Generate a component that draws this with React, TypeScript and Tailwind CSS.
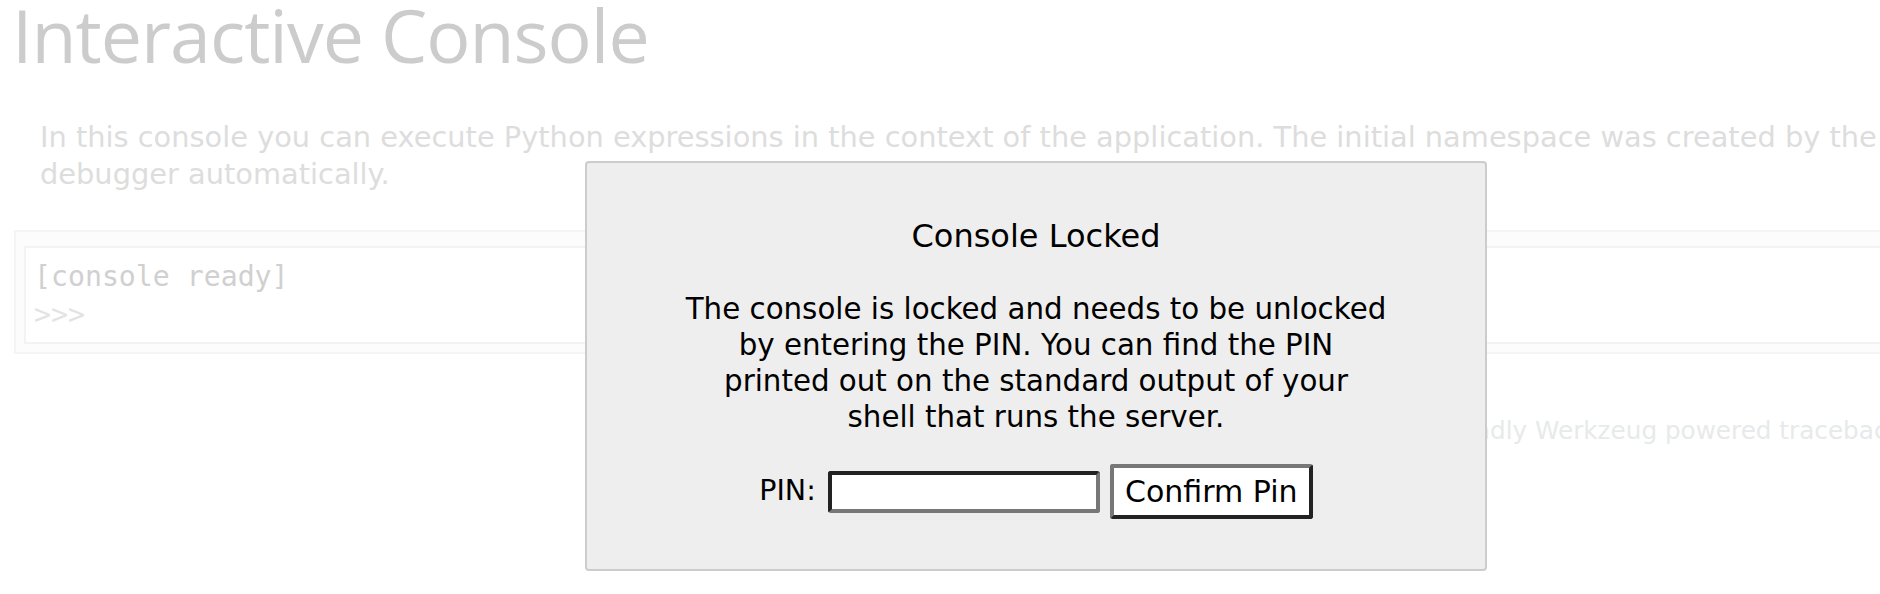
import React from 'react';

const sans = { fontFamily: '"DejaVu Sans", "Liberation Sans", sans-serif' };

const ConsoleLock: React.FC = () => {
  return (
    <div className="mx-auto mt-[161px] w-[902px] rounded-[4px] border-2 border-[#cccccc] bg-[#eeeeee] px-[80px] pt-[53px] pb-[50px] text-center text-black">
      <h3 className="text-[32px] leading-[40px]">Console Locked</h3>
      <p className="mt-[35px] whitespace-nowrap text-[29.3px] leading-[36px]">
        The console is locked and needs to be unlocked
        <br />
        by entering the PIN. You can find the PIN
        <br />
        printed out on the standard output of your
        <br />
        shell that runs the server.
      </p>
      <form className="mt-[29px] flex h-[55px] items-center justify-center text-[28.5px]">
        <label htmlFor="pin" className="mr-[12px]">PIN:</label>
        <input
          id="pin"
          type="text"
          className="h-[42px] w-[272px] rounded-[3px] border-[4px] border-t-[#222222] border-l-[#222222] border-b-[#777777] border-r-[#777777] bg-white outline-none"
          style={sans}
        />
        <button
          type="button"
          className="ml-[10px] h-[55px] w-[203px] rounded-[3px] border-[4px] border-t-[#777777] border-l-[#777777] border-b-[#222222] border-r-[#222222] bg-white text-[30px] text-black"
          style={sans}
        >
          Confirm Pin
        </button>
      </form>
    </div>
  );
};

export default function App() {
  return (
    <div className="relative h-[594px] w-[1880px] overflow-hidden bg-white" style={sans}>
      <div className="w-[2072px]">
        <h1
          className="ml-[12px] text-[73.5px] leading-[70px] tracking-[-1px] text-[#cccccc]"
          style={{ fontFamily: '"Open Sans", "DejaVu Sans", sans-serif' }}
        >
          Interactive Console
        </h1>
        <p className="mt-[49px] ml-[40px] whitespace-nowrap text-[28.85px] leading-[37px] text-[#dddddd]">
          In this console you can execute Python expressions in the context of the application. The initial namespace was created by the
          <br />
          debugger automatically.
        </p>
        <div className="mt-[37px] mx-[14px] border-2 border-[#f5f5f5] bg-[#fcfcfc] px-2 pt-[14px] pb-2">
          <div
            className="border-2 border-[#f3f3f3] bg-white pt-[9px] pb-[7px] pl-[8px] text-[28.2px] leading-[40px]"
            style={{ fontFamily: '"DejaVu Sans Mono", "Liberation Mono", monospace' }}
          >
            <div className="text-[#d0d0d0]">[console ready]</div>
            <div className="-mt-[2px] text-[#e3e3e3]">&gt;&gt;&gt;</div>
          </div>
        </div>
        <div className="mt-[61px] flex whitespace-nowrap text-[24.7px] leading-[32px] text-[#e7eaeb]">
          <span className="w-[1490px] shrink-0 overflow-hidden text-right">Brought to you by DON'T PANIC, your frien</span>
          <span>dly Werkzeug powered traceback interpreter.</span>
        </div>
      </div>
      <div className="absolute inset-y-0 left-0 w-[2072px]">
        <ConsoleLock />
      </div>
    </div>
  );
}
